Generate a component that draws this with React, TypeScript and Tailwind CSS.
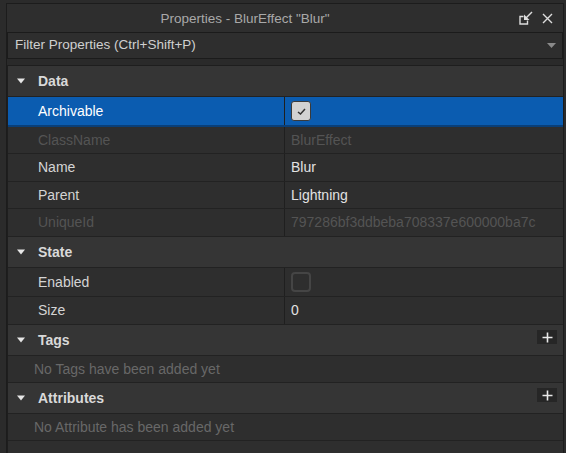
import React from "react"

type Row =
  | { kind: "header"; label: string; plus?: boolean }
  | { kind: "prop"; label: string; value?: string; disabled?: boolean; selected?: boolean; check?: "on" | "off"; h: string }
  | { kind: "empty"; label: string }

const rows: Row[] = [
  { kind: "header", label: "Data" },
  { kind: "prop", label: "Archivable", check: "on", selected: true, h: "h-[30px]" },
  { kind: "prop", label: "ClassName", value: "BlurEffect", disabled: true, h: "h-[27px]" },
  { kind: "prop", label: "Name", value: "Blur", h: "h-[28px]" },
  { kind: "prop", label: "Parent", value: "Lightning", h: "h-[27px]" },
  { kind: "prop", label: "UniqueId", value: "797286bf3ddbeba708337e600000ba7c", disabled: true, h: "h-[28px]" },
  { kind: "header", label: "State" },
  { kind: "prop", label: "Enabled", check: "off", h: "h-[29px]" },
  { kind: "prop", label: "Size", value: "0", h: "h-[28px]" },
  { kind: "header", label: "Tags", plus: true },
  { kind: "empty", label: "No Tags have been added yet" },
  { kind: "header", label: "Attributes", plus: true },
  { kind: "empty", label: "No Attribute has been added yet" },
]

function Caret() {
  return (
    <svg width="8" height="6" viewBox="0 0 8 6" className="shrink-0">
      <path d="M0 0.5 H8 L4 5.5 Z" fill="#e6e6e6" />
    </svg>
  )
}

function PlusButton() {
  return (
    <div className="ml-auto mr-[6px] -mt-[6px] w-[20px] h-[14px] bg-[#262626] flex items-center justify-center">
      <svg width="11" height="11" viewBox="0 0 11 11">
        <path d="M5.5 0.5 V10.5 M0.5 5.5 H10.5" stroke="#e8e8e8" strokeWidth="1.6" />
      </svg>
    </div>
  )
}

function CheckBox({ on }: { on: boolean }) {
  if (on) {
    return (
      <div className="w-[20px] h-[20px] rounded-[3px] bg-[#d2d2d2] border border-[#3a3a3a] flex items-center justify-center">
        <svg width="9" height="7" viewBox="0 0 9 7">
          <path d="M1 4 L3.5 6 L8 1" stroke="#333333" strokeWidth="1.5" fill="none" />
        </svg>
      </div>
    )
  }
  return <div className="w-[20px] h-[20px] rounded-[4px] border-2 border-[#454545]" />
}

function RowView({ row }: { row: Row }) {
  if (row.kind === "header") {
    return (
      <div className="h-[31px] flex items-center bg-[#353535] border-b border-[#222222]">
        <div className="w-[30px] pl-[9px] flex items-center">
          <Caret />
        </div>
        <span className="text-[14px] font-bold text-[#d9d9d9]">{row.label}</span>
        {row.plus && <PlusButton />}
      </div>
    )
  }
  if (row.kind === "empty") {
    return (
      <div className="h-[27px] flex items-center pl-[26px] bg-[#2e2e2e] border-b border-[#222222] text-[14px] text-[#686868]">
        {row.label}
      </div>
    )
  }
  const labelColor = row.selected ? "text-white" : row.disabled ? "text-[#545454]" : "text-[#d4d4d4]"
  const valueColor = row.disabled ? "text-[#545454]" : "text-[#e2e2e2]"
  return (
    <div
      className={
        row.selected
          ? `${row.h} flex bg-[#0b5cb0] border-b-2 border-[#0a3f78]`
          : `${row.h} flex bg-[#2e2e2e] border-b border-[#222222]`
      }
    >
      <div className={`w-[277px] flex items-center pl-[30px] border-r border-[#1f1f1f] text-[14px] ${labelColor}`}>
        {row.label}
      </div>
      <div className={`flex-1 flex items-center pl-[6px] text-[14px] ${valueColor}`}>
        {row.check ? <CheckBox on={row.check === "on"} /> : row.value}
      </div>
    </div>
  )
}

export default function App() {
  return (
    <div className="w-[566px] h-[453px] bg-[#2b2b2b] pl-[6px] pr-[2px] pt-[3px] flex flex-col font-['Liberation_Sans',sans-serif] overflow-hidden">
      <div className="flex-1 flex flex-col border-l border-t border-r border-[#1c1c1c] bg-[#2e2e2e]">
        {/* Title bar */}
        <div className="h-[28px] flex items-center pt-[2px] bg-[#2e2e2e]">
          <div className="flex-1 text-center pl-[44px] pr-[80px] text-[13.5px] text-[#a9a9a9]">
            Properties - BlurEffect "Blur"
          </div>
          <div className="flex items-center gap-[9px] pr-[10px] -mt-[2px]">
            <svg width="14" height="14" viewBox="0 0 14 14">
              <path d="M4.5 5.5 H1 V13 H8.5 V9.5" stroke="#dddddd" strokeWidth="1.4" fill="none" />
              <path d="M13 1 L6.5 7.5" stroke="#dddddd" strokeWidth="1.4" />
              <path d="M5 3.5 V9 H10.5 Z" fill="#dddddd" />
            </svg>
            <svg width="11" height="11" viewBox="0 0 11 11">
              <path d="M1 1 L10 10 M10 1 L1 10" stroke="#dddddd" strokeWidth="1.4" />
            </svg>
          </div>
        </div>

        {/* Filter */}
        <div className="h-[27px] flex items-center border border-[#1b1b1b] bg-[#2e2e2e] pl-[7px] pr-[6px]">
          <span className="text-[13.5px] text-[#d0d0d0]">Filter Properties (Ctrl+Shift+P)</span>
          <svg width="9" height="5" viewBox="0 0 9 5" className="ml-auto">
            <path d="M0 0 H9 L4.5 5 Z" fill="#8a8a8a" />
          </svg>
        </div>

        <div className="h-[6px] bg-[#2a2a2a]" />

        {/* Property grid */}
        <div className="flex-1 border-t border-l border-[#1e1e1e] bg-[#2e2e2e]">
          {rows.map((r, i) => (
            <RowView key={i} row={r} />
          ))}
        </div>
      </div>
    </div>
  )
}
